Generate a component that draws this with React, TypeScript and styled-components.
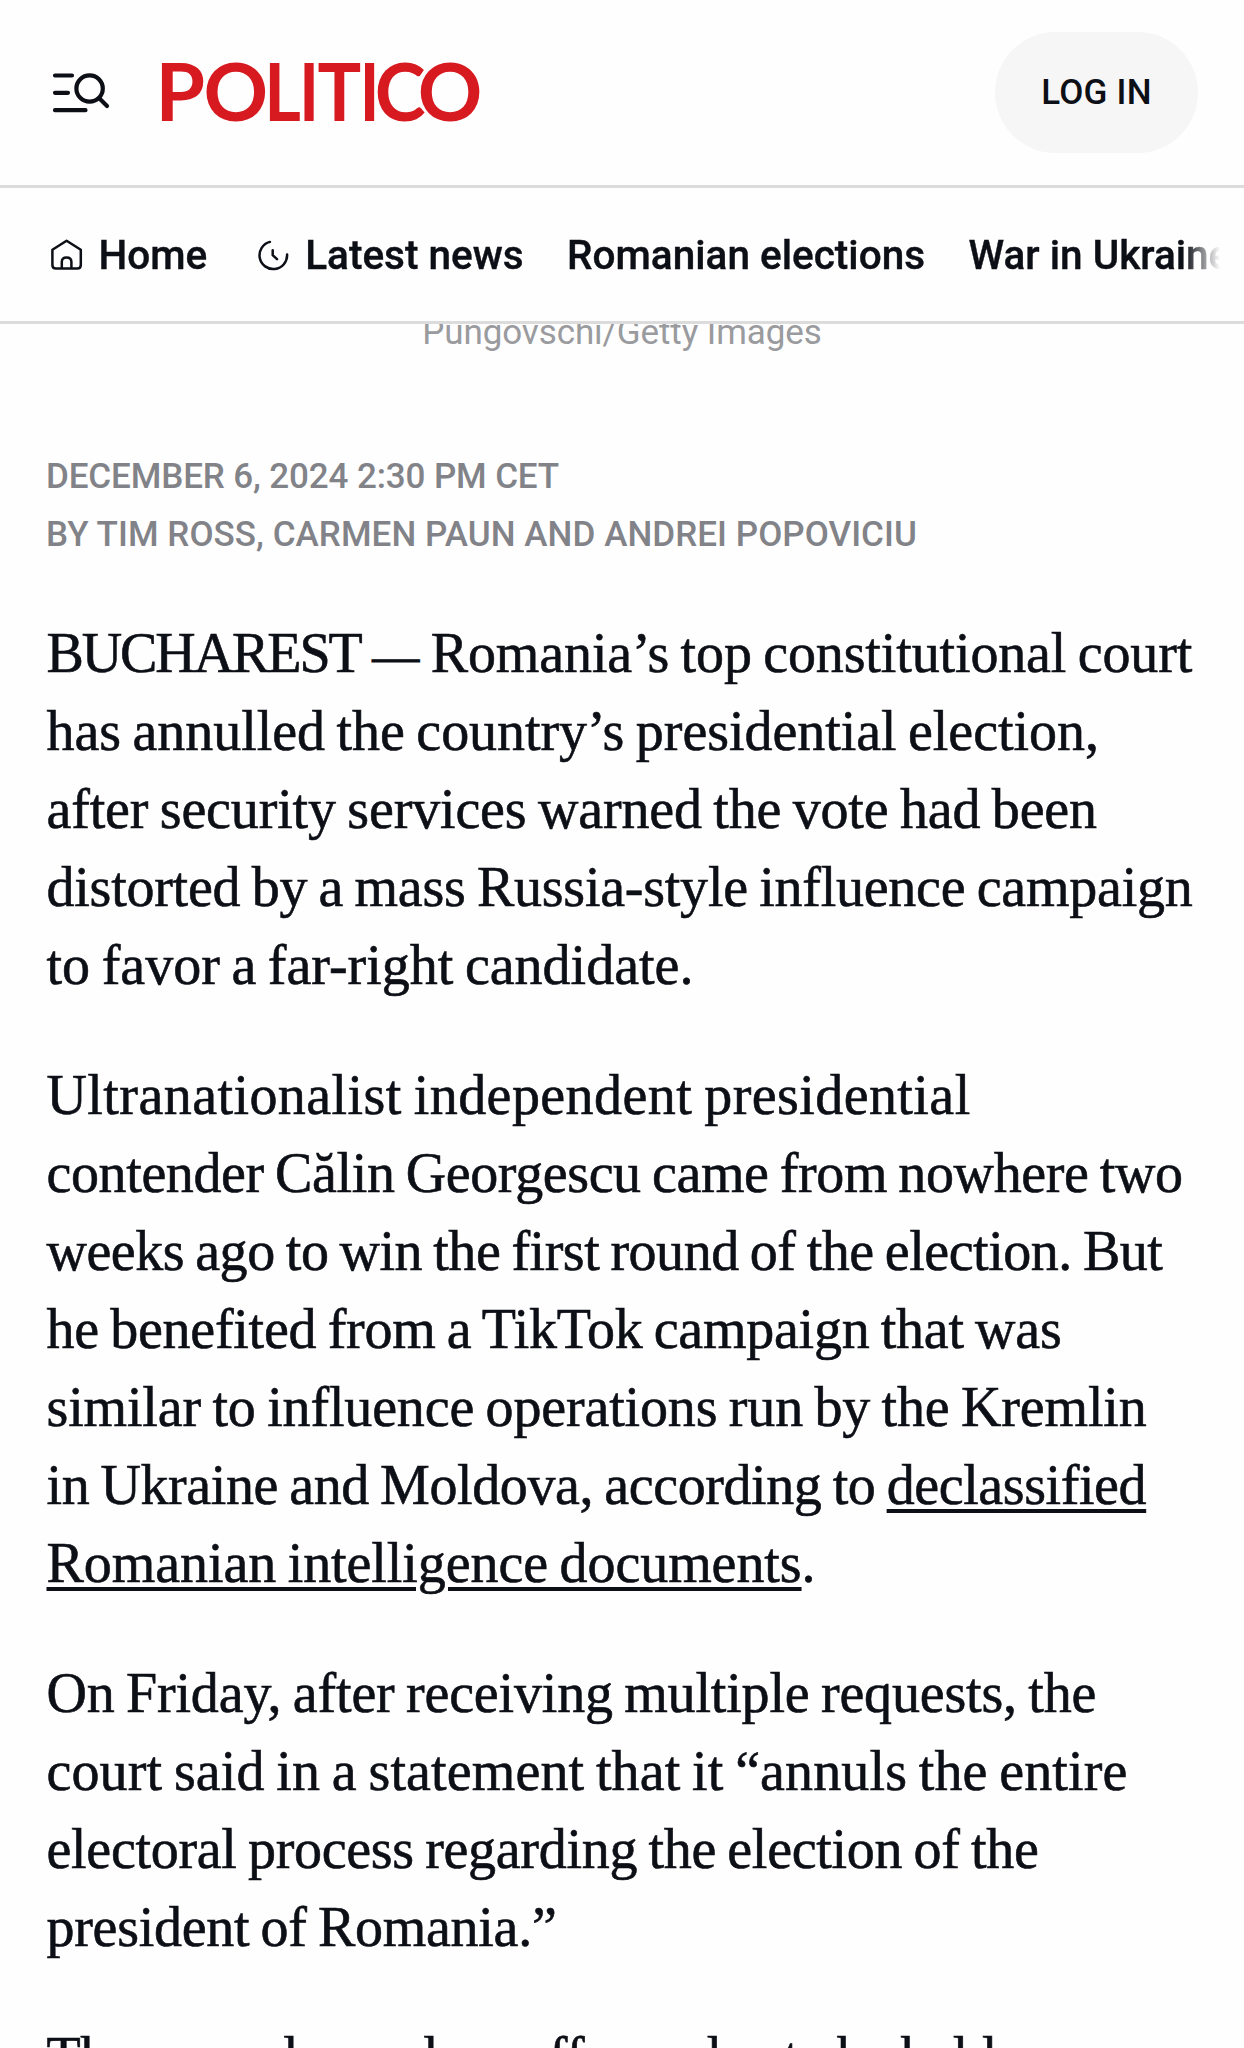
import React from 'react';
import styled, { createGlobalStyle } from 'styled-components';

const ink = '#0d0f16';
const sans = 'Roboto, "Liberation Sans", sans-serif';

const GlobalStyle = createGlobalStyle`
  body { margin: 0; background: #fefefe; color: ${ink}; }
`;

const Page = styled.div`
  height: 2048px;
  overflow: hidden;
  display: flex;
  flex-direction: column;
  font-family: ${sans};
`;

const TopBar = styled.header`
  box-sizing: border-box;
  flex: none;
  height: 188px;
  padding: 0 46px 0 48px;
  display: flex;
  align-items: center;
  border-bottom: 3px solid #dcdcdc;
`;

const MenuButton = styled.button`
  width: 64px;
  height: 64px;
  padding: 0;
  border: 0;
  background: none;
  color: inherit;
  svg { display: block; }
`;

const Brand = styled.a`
  margin-left: 43px;
  height: 90px;
  color: #d71920;
  svg { display: block; overflow: visible; }
  text { font: 700 80px Lato, sans-serif; fill: currentColor; }
`;

const LoginButton = styled.button`
  margin-left: auto;
  width: 203px;
  height: 121px;
  padding: 0;
  border: 0;
  border-radius: 61px;
  background: #f6f6f6;
  color: inherit;
  font: 500 35px/41px ${sans};
  letter-spacing: 0.2px;
`;

const Nav = styled.nav`
  box-sizing: border-box;
  flex: none;
  height: 136px;
  padding: 0 24px 0 48px;
  border-bottom: 3px solid #dcdcdc;
`;

const NavTrack = styled.div`
  height: 100%;
  display: flex;
  align-items: center;
  gap: 43.5px;
  overflow: hidden;
  mask-image: linear-gradient(to right, #000 calc(100% - 36px), transparent);
`;

const NavLink = styled.a`
  flex: none;
  display: flex;
  align-items: center;
  gap: 14.5px;
  font-size: 40.5px;
  font-weight: 500;
  line-height: 48px;
  white-space: nowrap;
  -webkit-text-stroke: 0.4px currentColor;
  svg { flex: none; }
  &:first-child { margin-right: 4px; }
`;

const Caption = styled.div`
  flex: none;
  height: 30px;
  overflow: hidden;
  display: flex;
  align-items: flex-end;
  justify-content: center;
  color: #9a9b9e;
  font-size: 35px;
  line-height: 42px;
  letter-spacing: -0.1px;
`;

const Meta = styled.div`
  margin-top: 94px;
  padding-left: 46px;
  color: #828388;
  font-size: 35px;
  font-weight: 500;
  line-height: 58px;
`;

const Article = styled.article`
  margin-top: 50px;
  padding-left: 46.5px;
  font-family: "Liberation Serif", serif;
  font-size: 56px;
  line-height: 78px;
  -webkit-text-stroke: 0.6px currentColor;
`;

const Paragraph = styled.p`
  margin: 0 0 52px;
  word-spacing: -2.4px;
  font-feature-settings: "liga" 1;
`;

const Line = styled.span<{ $track?: number }>`
  display: block;
  white-space: nowrap;
  letter-spacing: ${p => p.$track ?? 0}px;
`;

const Run = styled.span<{ $track: number }>`
  letter-spacing: ${p => p.$track}px;
`;

const Dash = styled.span`
  display: inline-block;
  width: 47px;
  font-size: 47px;
  line-height: 1;
  -webkit-text-stroke-width: 1px;
`;

const Link = styled.a`
  text-decoration: underline;
  text-decoration-thickness: 4px;
  text-underline-offset: 5px;
`;

const MenuSearchIcon = () => (
  <svg width="64" height="64" viewBox="48 60.5 64 64" fill="none" stroke="currentColor" strokeWidth="4.2" strokeLinecap="round">
    <path d="M55 75H72M55 92.3H68M55 109.7H85.5M100 98.5L107 105.5" />
    <circle cx="89.6" cy="88" r="13.2" />
  </svg>
);

const wordmark: [string, number, number][] = [
  ['P', 0.4, 1],
  ['O', 48.4, 1],
  ['L', 109.2, 0.88],
  ['I', 143.9, 0.85],
  ['T', 162.4, 0.91],
  ['I', 204.4, 0.85],
  ['C', 219.8, 0.96],
  ['O', 262.7, 1],
];

const Wordmark = () => (
  <svg width="330" height="90">
    {wordmark.map(([letter, x, scale], i) => (
      <text key={i} transform={`translate(${x} 72.5) scale(${scale} 1)`}>{letter}</text>
    ))}
  </svg>
);

const HomeIcon = () => (
  <svg width="36" height="36" viewBox="48 237 36 36" fill="none" stroke="currentColor" strokeWidth="2.5" strokeLinejoin="round">
    <path d="M66.6 240.8L80.8 249.8V265Q80.8 268.6 77.2 268.6H56Q52.4 268.6 52.4 265V249.8Z" />
    <path d="M61.8 268.6V262Q61.8 257.6 66.6 257.6Q71.4 257.6 71.4 262V268.6" />
  </svg>
);

const ClockIcon = () => (
  <svg width="36" height="36" viewBox="257 237 36 36" fill="none" stroke="currentColor" strokeWidth="2.5" strokeLinecap="round" strokeLinejoin="round">
    <path d="M271.9 241.9A13.8 13.8 0 1 0 289.1 254.6" />
    <path d="M274.7 250.2V255.2L279 259.2" />
  </svg>
);

export default function App() {
  return (
    <Page>
      <GlobalStyle />
      <TopBar>
        <MenuButton aria-label="Menu and search"><MenuSearchIcon /></MenuButton>
        <Brand><Wordmark /></Brand>
        <LoginButton>LOG IN</LoginButton>
      </TopBar>
      <Nav>
        <NavTrack>
          <NavLink><HomeIcon />Home</NavLink>
          <NavLink><ClockIcon />Latest news</NavLink>
          <NavLink>Romanian elections</NavLink>
          <NavLink>War in Ukraine</NavLink>
        </NavTrack>
      </Nav>
      <Caption>Pungovschi/Getty Images</Caption>
      <Meta>
        <Line $track={-0.13}>DECEMBER 6, 2024 2:30 PM CET</Line>
        <Line $track={0.05}>BY TIM ROSS, CARMEN PAUN AND ANDREI POPOVICIU</Line>
      </Meta>
      <Article>
        <Paragraph>
          <Line><Run $track={-2.1}>BUCHAREST</Run> <Dash>—</Dash> <Run $track={-0.13}>Romania’s top constitutional court</Run></Line>
          <Line $track={-0.05}>has annulled the country’s presidential election,</Line>
          <Line $track={-0.15}>after security services warned the vote had been</Line>
          <Line $track={-0.24}>distorted by a mass Russia-style influence campaign</Line>
          <Line>to favor a far-right candidate.</Line>
        </Paragraph>
        <Paragraph>
          <Line $track={0.43}>Ultranationalist independent presidential</Line>
          <Line $track={-0.38}>contender Călin Georgescu came from nowhere two</Line>
          <Line $track={-0.47}>weeks ago to win the first round of the election. But</Line>
          <Line $track={-0.25}>he benefited from a TikTok campaign that was</Line>
          <Line $track={-0.15}>similar to influence operations run by the Kremlin</Line>
          <Line $track={-0.4}>in Ukraine and Moldova, according to <Link>declassified</Link></Line>
          <Line $track={-0.07}><Link>Romanian intelligence documents</Link>.</Line>
        </Paragraph>
        <Paragraph>
          <Line $track={-0.17}>On Friday, after receiving multiple requests, the</Line>
          <Line $track={0.12}>court said in a statement that it “annuls the entire</Line>
          <Line $track={-0.29}>electoral process regarding the election of the</Line>
          <Line $track={-0.28}>president of Romania.”</Line>
        </Paragraph>
        <Paragraph>
          <Line $track={-0.4}>The second round runoff was due to be held</Line>
        </Paragraph>
      </Article>
    </Page>
  );
}
